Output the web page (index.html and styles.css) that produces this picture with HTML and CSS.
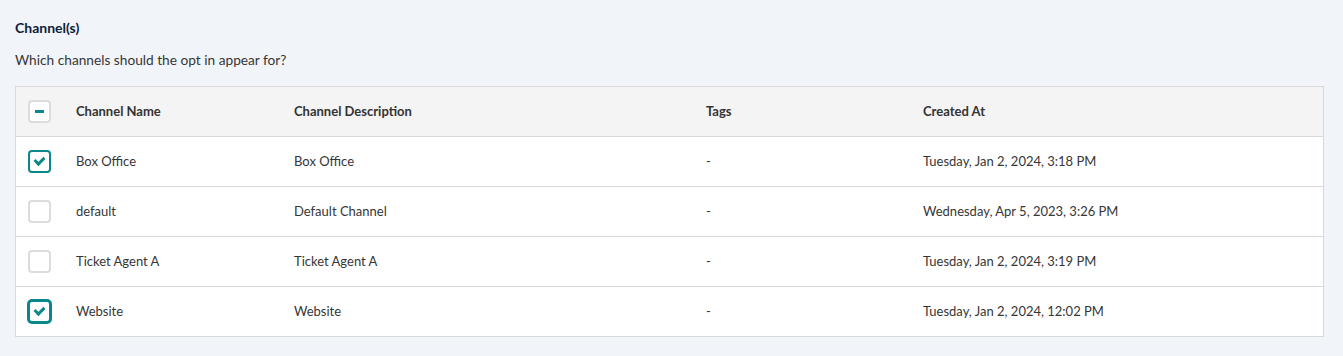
FILE: index.html
```html
<!DOCTYPE html>
<html lang="en">
<head>
    <meta charset="UTF-8">
    <title>Channels</title>
    <link rel="stylesheet" href="styles.css">
</head>
<body>
    <div class="section">
        <h3 class="section-title">Channel(s)</h3>
        <p class="section-help">Which channels should the opt in appear for?</p>
        <div class="table">
            <div class="row row-head">
                <div class="cell cell-check"><span class="box box-partial"></span></div>
                <div class="cell">Channel Name</div>
                <div class="cell">Channel Description</div>
                <div class="cell">Tags</div>
                <div class="cell">Created At</div>
            </div>
            <div class="row">
                <div class="cell cell-check"><span class="box box-checked"></span></div>
                <div class="cell">Box Office</div>
                <div class="cell">Box Office</div>
                <div class="cell">-</div>
                <div class="cell">Tuesday, Jan 2, 2024, 3:18 PM</div>
            </div>
            <div class="row">
                <div class="cell cell-check"><span class="box"></span></div>
                <div class="cell">default</div>
                <div class="cell">Default Channel</div>
                <div class="cell">-</div>
                <div class="cell">Wednesday, Apr 5, 2023, 3:26 PM</div>
            </div>
            <div class="row">
                <div class="cell cell-check"><span class="box"></span></div>
                <div class="cell">Ticket Agent A</div>
                <div class="cell">Ticket Agent A</div>
                <div class="cell">-</div>
                <div class="cell">Tuesday, Jan 2, 2024, 3:19 PM</div>
            </div>
            <div class="row">
                <div class="cell cell-check"><span class="box box-checked box-focus"></span></div>
                <div class="cell">Website</div>
                <div class="cell">Website</div>
                <div class="cell">-</div>
                <div class="cell">Tuesday, Jan 2, 2024, 12:02 PM</div>
            </div>
        </div>
    </div>
</body>
</html>
```

FILE: styles.css
```css
body {
    margin: 0;
    font-family: 'Lato', sans-serif;
    background-color: #f1f5f9;
    color: #363636;
}
.section {
    padding: 18px 15px 19px 15px;
}
.section-title {
    margin: 0;
    font-size: 14px;
    font-weight: 700;
    line-height: 20px;
    color: #0f1b3b;
}
.section-help {
    margin: 12px 0 16px 0;
    font-size: 13.7px;
    line-height: 20px;
    color: #363636;
}
.table {
    width: 1307px;
    border: 1px solid #d8d8d8;
    background-color: #ffffff;
}
.row {
    display: grid;
    grid-template-columns: 48px 218px 412px 217px 1fr;
    height: 49px;
    border-top: 1px solid #d8d8d8;
    font-size: 13px;
}
.row-head {
    border-top: none;
    background-color: #f4f4f4;
    font-weight: 700;
    color: #333333;
}
.cell {
    display: flex;
    align-items: center;
    padding: 0 12px 2px 12px;
}
.cell-check {
    padding: 0 0 0 12px;
}
.box {
    position: relative;
    box-sizing: border-box;
    width: 23px;
    height: 23px;
    border: 2px solid #dcdcdc;
    border-radius: 4px;
    background-color: #ffffff;
}
.box-partial::after {
    content: '';
    position: absolute;
    left: 5px;
    top: 8px;
    width: 9px;
    height: 3px;
    background-color: #0a878c;
}
.box-checked {
    border-color: #0a878c;
}
.box-checked::after {
    content: '';
    position: absolute;
    left: 6px;
    top: 3px;
    width: 4px;
    height: 7px;
    border-right: 3px solid #0a878c;
    border-bottom: 3px solid #0a878c;
    transform: rotate(45deg);
}
.box-focus {
    box-shadow: 0 0 0 1px #0a878c;
}
```
